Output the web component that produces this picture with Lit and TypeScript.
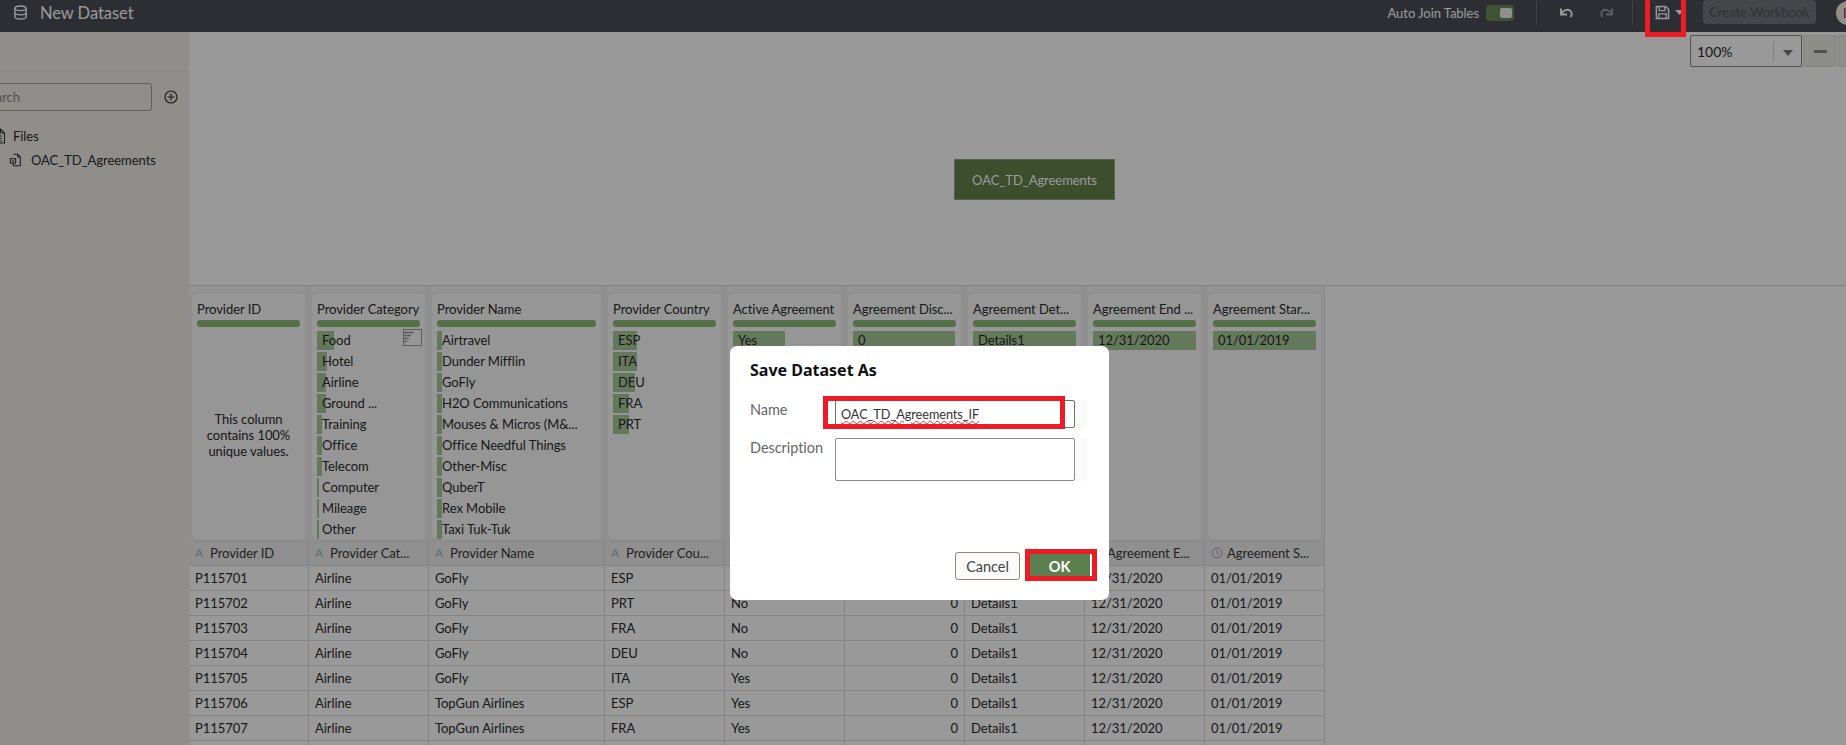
import { LitElement, html, css, svg } from "lit";
import { customElement } from "lit/decorators.js";

type ProfileRow = [string, number];

interface Column {
  title: string;
  head: string;
  type: "A" | "clock" | "#";
  rows: ProfileRow[];
  note?: string;
  num?: boolean;
}

const columns: Column[] = [
  { title: "Provider ID", head: "Provider ID", type: "A", rows: [], note: "This column contains 100% unique values." },
  {
    title: "Provider Category",
    head: "Provider Cat...",
    type: "A",
    rows: [
      ["Food", 17], ["Hotel", 10], ["Airline", 9], ["Ground ...", 9], ["Training", 5],
      ["Office", 5], ["Telecom", 5], ["Computer", 2], ["Mileage", 2], ["Other", 2],
    ],
  },
  {
    title: "Provider Name",
    head: "Provider Name",
    type: "A",
    rows: [
      ["Airtravel", 5], ["Dunder Mifflin", 5], ["GoFly", 5], ["H2O Communications", 5], ["Mouses & Micros (M&...", 5],
      ["Office Needful Things", 5], ["Other-Misc", 5], ["QuberT", 5], ["Rex Mobile", 5], ["Taxi Tuk-Tuk", 5],
    ],
  },
  {
    title: "Provider Country",
    head: "Provider Cou...",
    type: "A",
    rows: [["ESP", 24], ["ITA", 24], ["DEU", 22], ["FRA", 16], ["PRT", 16]],
  },
  { title: "Active Agreement", head: "Active Agree...", type: "A", rows: [["Yes", 52], ["No", 38]] },
  { title: "Agreement Disc...", head: "Agreement Di...", type: "#", rows: [["0", 102]], num: true },
  { title: "Agreement Det...", head: "Agreement D...", type: "A", rows: [["Details1", 103]] },
  { title: "Agreement End ...", head: "Agreement E...", type: "clock", rows: [["12/31/2020", 103]] },
  { title: "Agreement Star...", head: "Agreement S...", type: "clock", rows: [["01/01/2019", 103]] },
];

const tableRows = [
  ["P115701", "Airline", "GoFly", "ESP", "Yes"],
  ["P115702", "Airline", "GoFly", "PRT", "No"],
  ["P115703", "Airline", "GoFly", "FRA", "No"],
  ["P115704", "Airline", "GoFly", "DEU", "No"],
  ["P115705", "Airline", "GoFly", "ITA", "Yes"],
  ["P115706", "Airline", "TopGun Airlines", "ESP", "Yes"],
  ["P115707", "Airline", "TopGun Airlines", "FRA", "Yes"],
  ["", "", "", "", ""],
];

const fileIcon = svg`<path d="M5 1.5h5l3 3v10H5v-3M10 1.5v3h3" fill="none" stroke="currentColor" stroke-width="1.2"/><rect x="1.5" y="6.5" width="6" height="5" fill="none" stroke="currentColor" stroke-width="1.2"/><rect x="3.6" y="8.2" width="1.8" height="1.8" fill="currentColor"/>`;

@customElement("app-root")
export class AppRoot extends LitElement {
  static styles = css`
    :host {
      display: block;
      width: 1846px;
      height: 745px;
      overflow: hidden;
      position: relative;
      background: #fff;
      font-family: Lato, "Noto Sans", sans-serif;
      font-size: 13px;
      letter-spacing: -0.05px;
      color: #2a2a2a;
    }
    svg { display: block; }
    .top {
      height: 32px;
      box-sizing: border-box;
      padding: 0 0 7px 13px;
      background: #4b4d55;
      color: #fff;
      display: flex;
      align-items: center;
      justify-content: space-between;
    }
    .brand { display: flex; align-items: center; gap: 12px; font-size: 16.5px; }
    .tools { display: flex; align-items: center; margin-right: -14px; height: 25px; }
    .tools .label { margin-right: 7px; }
    .toggle {
      width: 28px;
      height: 16px;
      border-radius: 4px;
      background: #668a55;
      box-sizing: border-box;
      padding: 3px 2px;
      display: flex;
      justify-content: flex-end;
    }
    .toggle i { display: block; width: 12px; height: 10px; border-radius: 2px; background: #eee; }
    .sep { width: 1px; height: 24px; background: #6c6e75; }
    .create {
      width: 113px;
      height: 24px;
      margin: -1px 0 0 19px;
      border-radius: 4px;
      background: #74767c;
      color: #50525a;
      display: flex;
      align-items: center;
      justify-content: center;
    }
    .avatar {
      width: 24px;
      height: 24px;
      margin-left: 20px;
      border-radius: 50%;
      background: #f2ebe4;
      color: #a02a55;
      line-height: 24px;
      padding-left: 7px;
      box-sizing: border-box;
    }
    .body { display: flex; height: 713px; }
    .panel {
      width: 189px;
      flex: none;
      background: #eeede8;
      padding-top: 39px;
      box-sizing: border-box;
      overflow: hidden;
    }
    .panel hr { margin: 0 2px 11px 0; border: 0; border-top: 1px solid #e2e0da; }
    .search { display: flex; align-items: center; gap: 12px; margin-left: -22px; }
    .search div {
      width: 174px;
      height: 28px;
      box-sizing: border-box;
      border: 1px solid #a3a19c;
      border-radius: 3px;
      line-height: 26px;
      padding-left: 3px;
      color: #8a8884;
    }
    .tree { margin-top: 13px; }
    .tree div { height: 24px; display: flex; align-items: center; gap: 7px; }
    .files { margin-left: -8px; }
    .oac { margin-left: 9px; gap: 8px !important; }
    .main { flex: 1; display: flex; flex-direction: column; min-width: 0; }
    .canvas {
      height: 254px;
      flex: none;
      position: relative;
      box-sizing: border-box;
      padding: 3px 0 0 0;
      display: flex;
      justify-content: flex-end;
      border-bottom: 1px solid #d8d8d8;
    }
    .zoom { display: flex; height: 32px; margin-right: -26px; gap: 1px; }
    .select {
      width: 112px;
      box-sizing: border-box;
      border: 1px solid #888;
      border-radius: 2px 0 0 2px;
      display: flex;
      align-items: center;
      justify-content: space-between;
      padding-left: 6px;
      font-size: 14px;
    }
    .select span { width: 27px; height: 20px; border-left: 1px solid #d8d8d8; display: flex; align-items: center; justify-content: center; }
    .select span i { border: 5px solid transparent; border-top: 6px solid #777; border-bottom: 0; margin-top: 3px; }
    .zbtn {
      width: 34px;
      box-sizing: border-box;
      border: 1px solid #dcdbd7;
      border-radius: 2px;
      background: #ecebe7;
      display: flex;
      align-items: center;
      justify-content: center;
    }
    .zbtn i { width: 13px; height: 3px; background: #888; }
    .node {
      position: absolute;
      left: 765px;
      top: 127px;
      width: 161px;
      height: 41px;
      box-sizing: border-box;
      background: #64824e;
      border: 1px solid #8ea183;
      color: #fff;
      display: flex;
      align-items: center;
      justify-content: center;
    }
    .grid {
      display: grid;
      grid-template-columns: 120px 120px 176px repeat(6, 120px);
      width: 1136px;
    }
    .cardcell {
      background: #f3f3f3;
      border-right: 1px solid #e2e2e2;
      padding: 7px 3px 0 3px;
      height: 254px;
      box-sizing: border-box;
    }
    .card {
      position: relative;
      height: 247px;
      box-sizing: border-box;
      background: #fbfbfb;
      border-radius: 5px;
      box-shadow: 0 0 2px #cfcfcf;
      padding: 7px 5px 0;
      overflow: hidden;
    }
    .title { height: 18px; line-height: 18px; white-space: nowrap; overflow: hidden; }
    .bar { height: 7px; border-radius: 3px; background: #8ebb7b; margin: 2px 0 4px; }
    .rows { display: flex; flex-direction: column; gap: 2px; }
    .row {
      height: 19px;
      line-height: 19px;
      padding-left: 5px;
      white-space: nowrap;
      background: linear-gradient(#a7c89a, #a7c89a) no-repeat;
    }
    .note { text-align: center; line-height: 16px; margin-top: 84px; padding: 0 4px; }
    .mini {
      position: absolute;
      right: 3px;
      top: 36px;
      color: #9a9a9a;
    }
    .head, .cell {
      height: 25px;
      box-sizing: border-box;
      border-right: 1px solid #dcdcdc;
      border-bottom: 1px solid #dcdcdc;
      padding: 0 6px;
      display: flex;
      align-items: center;
      white-space: nowrap;
      overflow: hidden;
    }
    .head { height: 26px; background: #eeeeee; gap: 7px; color: #3a3a3a; }
    .head b { font-weight: 400; font-size: 12px; color: #a4b6c4; width: 8px; }
    .head svg { color: #a898bd; margin-right: -3px; }
    .cell.num { justify-content: flex-end; }
    .overlay { position: absolute; inset: 0; background: rgba(0, 0, 0, 0.4); }
    .dialog {
      position: absolute;
      left: 730px;
      top: 346px;
      width: 379px;
      height: 254px;
      box-sizing: border-box;
      background: #fff;
      border-radius: 7px;
      padding: 14px 19px 20px 20px;
      display: flex;
      flex-direction: column;
    }
    .dialog h2 { margin: 0 0 20px; font: 700 16px/20px "Noto Sans", sans-serif; letter-spacing: 0; color: #111; }
    .form { display: grid; grid-template-columns: 85px 240px; row-gap: 10px; color: #666; font-size: 14.5px; line-height: 20px; }
    .input {
      height: 28px;
      box-sizing: border-box;
      border: 1px solid #5f7d52;
      border-radius: 2px;
      box-shadow: 12px 0 0 #fbfbfb;
      padding: 3px 5px 0;
      font-size: 12.7px;
      color: #333;
      white-space: nowrap;
    }
    .input span { text-decoration: underline wavy #e03030; text-decoration-thickness: 1px; }
    .area { height: 43px; box-sizing: border-box; border: 1px solid #8d8d8d; border-radius: 2px; box-shadow: 12px 0 0 #fbfbfb; }
    .foot { margin-top: auto; display: flex; justify-content: flex-end; gap: 9px; }
    .btn {
      height: 28px;
      box-sizing: border-box;
      display: flex;
      align-items: center;
      justify-content: center;
      font-size: 14.5px;
      border-radius: 3px;
    }
    .cancel { width: 65px; background: #fbfaf8; border: 1px solid #8a8680; color: #444; }
    .ok { width: 61px; background: #5c7f50; color: #fff; font-weight: 700; }
    .mark { position: absolute; box-sizing: border-box; border: 5px solid #ed1c24; }
    .mark.save { left: 1645px; top: -6px; width: 41px; height: 43px; }
    .mark.name { left: 823px; top: 396px; width: 242px; height: 33px; }
    .mark.okm { left: 1025px; top: 549px; width: 72px; height: 32px; }
  `;

  private icon(body: unknown, w = 16, h = 16, style = "") {
    return html`<svg width=${w} height=${h} viewBox="0 0 16 16" style=${style}>${body}</svg>`;
  }

  private renderTop() {
    const arrow = svg`<path d="M3 3.5v6h6M3 9.5C5 5.5 9 3.5 12 5.5c2.2 1.5 2.2 4.5.5 6.5" fill="none" stroke="currentColor" stroke-width="1.9"/>`;
    const save = svg`<path d="M1.5 1.5h10l3 3v10h-13z" fill="none" stroke="currentColor" stroke-width="1.6"/><path d="M4.5 2v4h6V2M4 14V9.5h8V14" fill="none" stroke="currentColor" stroke-width="1.4"/>`;
    const db = svg`<ellipse cx="8" cy="3.5" rx="6" ry="2.5" fill="none" stroke="currentColor" stroke-width="1.5"/><path d="M2 3.5v9C2 14 5 15 8 15s6-1 6-2.5v-9M2 8c0 1.5 3 2.5 6 2.5S14 9.500 14 8" fill="none" stroke="currentColor" stroke-width="1.5"/>`;
    return html`<div class="top">
      <div class="brand">${this.icon(db, 15, 15)}<span>New Dataset</span></div>
      <div class="tools">
        <span class="label">Auto Join Tables</span>
        <div class="toggle"><i></i></div>
        <div class="sep" style="margin-left:22px"></div>
        ${this.icon(arrow, 16, 16, "margin-left:21px")}
        ${this.icon(arrow, 16, 16, "margin-left:25px;transform:scaleX(-1);opacity:.45")}
        <div class="sep" style="margin-left:17px"></div>
        ${this.icon(save, 15, 15, "margin-left:22px")}
        <svg width="9" height="5" viewBox="0 0 9 5" style="margin-left:5px"><path d="M0 0h9L4.500 5z" fill="currentColor"/></svg>
        <div class="create">Create Workbook</div>
        <div class="avatar">I</div>
      </div>
    </div>`;
  }

  private renderPanel() {
    return html`<aside class="panel">
      <hr />
      <div class="search">
        <div>Search</div>
        <svg width="14" height="14" viewBox="0 0 14 14"><circle cx="7" cy="7" r="6" fill="none" stroke="#333" stroke-width="1.200"/><path d="M7 3.500v7M3.500 7h7" stroke="#333" stroke-width="1.200"/></svg>
      </div>
      <div class="tree">
        <div class="files">
          <svg width="14" height="16" viewBox="0 0 14 16"><path d="M1.500 1h7l4 4v10h-11zM8.500 1v4h4M4 8h6M4 10.500h6M4 13h6" fill="none" stroke="#333" stroke-width="1.100"/></svg>
          <span>Files</span>
        </div>
        <div class="oac">${this.icon(fileIcon, 14, 14, "color:#333")}<span>OAC_TD_Agreements</span></div>
      </div>
    </aside>`;
  }

  private renderCard(c: Column, i: number) {
    return html`<div class="cardcell">
      <div class="card">
        <div class="title">${c.title}</div>
        <div class="bar"></div>
        ${c.note ? html`<div class="note">${c.note}</div>` : ""}
        <div class="rows">
          ${c.rows.map(([label, w]) => html`<div class="row" style="background-size:${w}px 100%">${label}</div>`)}
        </div>
        ${i === 1
          ? html`<svg class="mini" width="19" height="17" viewBox="0 0 19 17"><rect x=".5" y=".5" width="18" height="16" fill="none" stroke="currentColor"/><path d="M1 3.500h10M1 6.500h7M1 9.500h5M1 12.500h3" stroke="currentColor" stroke-width="1.500"/></svg>`
          : ""}
      </div>
    </div>`;
  }

  private renderHead(c: Column) {
    const clock = svg`<circle cx="8" cy="8" r="6.500" fill="none" stroke="currentColor" stroke-width="1.300"/><path d="M8 4v4.500l3 1.500" fill="none" stroke="currentColor" stroke-width="1.200"/>`;
    return html`<div class="head">
      ${c.type === "clock" ? this.icon(clock, 12, 12) : html`<b>${c.type}</b>`}
      <span>${c.head}</span>
    </div>`;
  }

  private renderRow(r: string[]) {
    const filled = r[0] !== "";
    const tail = filled ? ["0", "Details1", "12/31/2020", "01/01/2019"] : ["", "", "", ""];
    return html`${r.map((v) => html`<div class="cell">${v}</div>`)}
      <div class="cell num">${tail[0]}</div>
      ${tail.slice(1).map((v) => html`<div class="cell">${v}</div>`)}`;
  }

  render() {
    return html`
      ${this.renderTop()}
      <div class="body">
        ${this.renderPanel()}
        <main class="main">
          <div class="canvas">
            <div class="zoom">
              <div class="select">100%<span><i></i></span></div>
              <div class="zbtn"><i></i></div>
              <div class="zbtn"></div>
            </div>
            <div class="node">OAC_TD_Agreements</div>
          </div>
          <div class="grid">
            ${columns.map((c, i) => this.renderCard(c, i))}
            ${columns.map((c) => this.renderHead(c))}
            ${tableRows.map((r) => this.renderRow(r))}
          </div>
        </main>
      </div>
      <div class="overlay"></div>
      <section class="dialog">
        <h2>Save Dataset As</h2>
        <div class="form">
          <label>Name</label>
          <div class="input"><span>OAC_TD_Agreements_IF</span></div>
          <label>Description</label>
          <div class="area"></div>
        </div>
        <div class="foot">
          <div class="btn cancel">Cancel</div>
          <div class="btn ok">OK</div>
        </div>
      </section>
      <div class="mark save"></div>
      <div class="mark name"></div>
      <div class="mark okm"></div>
    `;
  }
}
